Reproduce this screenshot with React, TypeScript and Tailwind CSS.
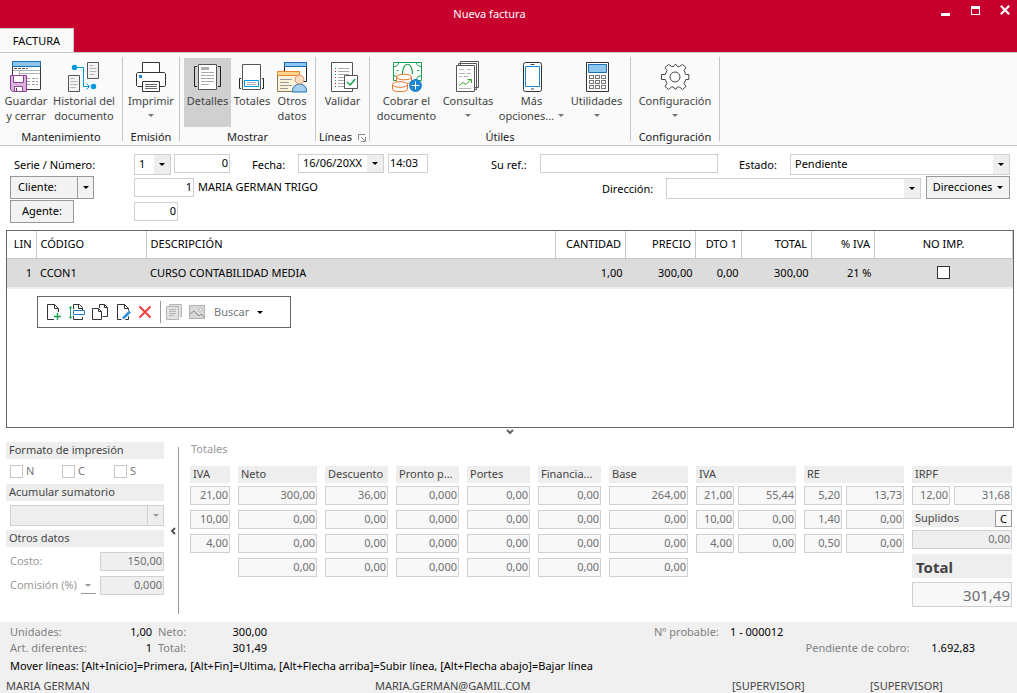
import * as React from "react";
import clsx from "clsx";

interface FieldProps {
  label: string;
  value?: string;
  className?: string;
}

const Caret = ({ className }: { className?: string }) => (
  <svg width="6" height="3" viewBox="0 0 6 3" className={className} fill="currentColor" aria-hidden="true">
    <path d="M0 0h6L3 3z" />
  </svg>
);

function Field({ label, value = "", className }: FieldProps) {
  return (
    <input
      type="text"
      aria-label={label}
      defaultValue={value}
      className={clsx("h-[19px] border border-[#d0d0d0] bg-white px-px pb-[2px] text-right", className)}
    />
  );
}

// read only amount of the totals area
function Amount({ label, value = "", className }: FieldProps) {
  return (
    <input
      type="text"
      readOnly
      aria-label={label}
      defaultValue={value}
      className={clsx("w-full min-w-0 border border-[#d0d0d0] px-px text-right text-[#6e6e6e]", className || "h-[19px] bg-[#f8f8f8] pb-[2px]")}
    />
  );
}

interface DropDownProps {
  id: string;
  label?: string;
  options: string[];
  className?: string;
  disabled?: boolean;
}

function DropDown({ id, label, options, className, disabled }: DropDownProps) {
  return (
    <div className={clsx("relative border border-[#d0d0d0]", className, disabled ? "bg-[#eeeeee] text-[#9a9a9a]" : "bg-white")}>
      <select id={id} aria-label={label} disabled={disabled} className="block h-full w-full appearance-none pl-1 pr-4">
        {options.map((o) => (
          <option key={o}>{o}</option>
        ))}
      </select>
      <span
        className={clsx(
          "pointer-events-none absolute inset-y-0 right-0 flex w-4 items-center justify-center",
          disabled ? "border-l border-[#d0d0d0]" : "bg-[#eeeeee]"
        )}
      >
        <Caret />
      </span>
    </div>
  );
}

/* ---------- ribbon icons, all on a 32px board ---------- */

function Board({ children }: { children: React.ReactNode }) {
  return (
    <svg width="32" height="32" viewBox="0 0 32 32" fill="none" aria-hidden="true">
      {children}
    </svg>
  );
}

const SaveIcon = () => (
  <Board>
    <path d="M2.5.5h28v28h-28z" fill="#fff" stroke="#3b3b3b" />
    <path d="M2.5.5h28v5h-28z" fill="#8fc6ee" stroke="#1a6fb5" />
    <path d="M4 7.5h3m1 0h3m1 0h3m1 0h2" stroke="#555" />
    <path d="M3 9.5h27M9 12.5h21M9.5 10v4" stroke="#b0b0b0" />
    <path d="M17 17.5h3m2 0h3m1 0h2M17 20.5h3m2 0h3m1 0h2M17 23.5h3m2 0h3m1 0h2" stroke="#a0a0a0" />
    <path d="M.5 14.500h16v16h-14l-2-2z" fill="#d9b3dc" stroke="#8e3f98" />
    <path d="M3.500 14.500h10v7h-10z" fill="#fff" stroke="#8e3f98" />
    <path d="M4.500 25.500h8v5h-8z" fill="#fff" stroke="#8e3f98" />
    <path d="M6.500 27v3" stroke="#444" />
  </Board>
);

const HistoryIcon = () => (
  <Board>
    <path d="M19.500 1.500h11v16h-11zM.5 14.500h11v16H.5z" fill="#f4f4f4" stroke="#555" />
    <path d="M21.500 4.500h4m-4 3h7m-7 3h7m-7 3h5M2.500 17.500h4m-4 3h7m-7 3h7m-7 3h5" stroke="#b5b5b5" />
    <path d="M6 6.500h9.500v19H21M18.500 22.500l3 3-3 3" stroke="#0099dd" />
    <circle cx="6.500" cy="6.500" r="2.700" fill="#0099dd" />
    <circle cx="25.500" cy="25.500" r="2.700" fill="#0099dd" />
  </Board>
);

const PrintIcon = () => (
  <Board>
    <path d="M7.500 1.500h17v11h-17z" fill="#fff" stroke="#333" />
    <path d="M7.500 25.500h-5l-1-1v-12l1-1h27l1 1v12l-1 1h-5" fill="#fff" stroke="#333" />
    <path d="M7.500 20.500h17v10h-17z" fill="#fff" stroke="#333" />
    <path d="M10 23.500h12M10 25.500h12M10 27.500h12" stroke="#666" />
    <path d="M4 14h3v3H4z" fill="#1e7fd0" />
  </Board>
);

const DetailsIcon = () => (
  <Board>
    <path d="M6.500 3.500h18v25h-18z" fill="#fff" stroke="#555" />
    <path d="M9 6h8v3H9z" fill="#b0b0b0" />
    <path d="M9 11.500h13M9 14.500h13M9 17.500h13M9 20.500h13M9 23.500h8" stroke="#aaa" />
    <path d="M5 5.500H2.500v20H5M26 5.500h2.500v20H26" stroke="#222" />
  </Board>
);

const TotalsIcon = () => (
  <Board>
    <path d="M6.500 3.500h18v25h-18z" fill="#fff" stroke="#555" />
    <path d="M8.500 19.500h14v6h-14z" fill="#fff" stroke="#0099dd" />
    <path d="M11 21.500h9M11 23.500h9" stroke="#aaa" />
    <path d="M5 17.500H3.500v10H5M26 17.500h1.500v10H26" stroke="#222" />
  </Board>
);

const OtherDataIcon = () => (
  <Board>
    <path d="M8.500 1.500h22v19h-22z" fill="#fff" stroke="#222" />
    <path d="M8.500 1.500h22v4h-22z" fill="#8fc6ee" stroke="#1a6fb5" />
    <path d="M1.500 10.500h22v20h-22z" fill="#fbf3dc" stroke="#8a7b55" />
    <path d="M1.500 10.500h22v4h-22z" fill="#fbd38a" stroke="#e8872e" />
    <path d="M4 18.500h12M4 21.500h9M4 24.500h12M4 27.500h8" stroke="#999" />
    <path d="M16.500 31v-1.500a7 6.500 0 0 1 14 0V31z" fill="#a6cfee" stroke="#1a6fb5" />
    <circle cx="23.500" cy="18.500" r="4.500" fill="#fbdcc0" stroke="#d9905c" />
  </Board>
);

const ValidateIcon = () => (
  <Board>
    <path d="M25.500 14V1.500h-21v29h21V28" fill="#fff" stroke="#555" />
    <path d="M11 7.500h11M11 10.500h11M11 13.500h11M11 16.500h6M11 19.500h6M11 22.500h6M11 25.500h6" stroke="#aaa" />
    <path d="M8 7.500h1M8 13.500h1M8 19.500h1M8 25.500h1" stroke="#12a04a" />
    <path d="M8 10.500h1M8 16.500h1M8 22.500h1" stroke="#d0103a" />
    <path d="M17.500 14.500h13v13h-13z" fill="#fff" stroke="#555" />
    <path d="M20 21l3.200 3 5-6" stroke="#12a04a" strokeWidth="1.500" />
  </Board>
);

const CashIcon = () => (
  <Board>
    <path d="M2.500 1.500h28v18h-28z" fill="#fff" stroke="#12a04a" />
    <path d="M3 5.500c3 0 4-1 4.500-4M25.500 1.500c.5 3 2 4 5 4M3 15c3 0 4 1 4.500 4M30 15c-3 0-4 1-4.500 4M5.500 9.500h2M26 9.500h2" stroke="#12a04a" />
    <path d="M11.500 13c0-13 10-13 10 0" stroke="#12a04a" strokeWidth="1.200" />
    <path d="M5.500 16v4c0 3.500 15 3.500 15 0v-4z" fill="#fff" stroke="#e8762e" />
    <path d="M1.500 24v4c0 3.500 15 3.500 15 0v-4z" fill="#fff" stroke="#e8762e" />
    <ellipse cx="13" cy="16" rx="7.500" ry="2.800" fill="#fff" stroke="#e8762e" />
    <ellipse cx="9" cy="23.500" rx="7.500" ry="2.800" fill="#fff" stroke="#e8762e" />
    <circle cx="24.500" cy="24.500" r="6.500" fill="#1e86d0" />
    <path d="M24.500 20.500v8M20.500 24.500h8" stroke="#fff" />
  </Board>
);

const QueriesIcon = () => (
  <Board>
    <path d="M8.500 .500h18v26h-18zM6.500 2.500h18v26h-18z" fill="#fff" stroke="#555" />
    <path d="M4.500 4.500h18v26h-18z" fill="#fff" stroke="#555" />
    <path d="M7 8.500h5m3 0h4M7 12.500h6m2 0h4M7 15.500h3m2 0h4M7 27.500h12" stroke="#b5b5b5" />
    <path d="M7 24.500l4-3 3 2 5-5M15.500 18.500h4v3.500" stroke="#3fa535" />
  </Board>
);

const PhoneIcon = () => (
  <Board>
    <rect x="7.500" y="1.500" width="18" height="29" rx="2" fill="#fff" stroke="#333" />
    <path d="M9.500 5.500h14v20h-14z" stroke="#1e86d0" />
    <path d="M14.500 3.500h4M15 28h3" stroke="#444" />
  </Board>
);

const CalcIcon = () => (
  <Board>
    <path d="M5.500 1.500h22v29h-22z" fill="#fff" stroke="#333" />
    <path d="M7.500 3.500h18v8h-18z" fill="#8fc6ee" stroke="#1a6fb5" />
    {[14.5, 19.5, 24.5].map((y) => (
      <g key={y} stroke="#777">
        <rect x="8.500" y={y} width="4" height="3" />
        <rect x="14.500" y={y} width="4" height="3" />
        <rect x="20.500" y={y} width="4" height="3" />
      </g>
    ))}
  </Board>
);

const GearIcon = () => (
  <Board>
    <path
      d="M2.500 13.500h3.700l1.800-4-2-3 3.500-3 3 2h2l1.500-2h1l1.500 2h2l3-2 3.500 3-2 3 1.800 4h3v5h-3l-1.800 4 2 3-3.500 3-3-2.500h-2l-1.500 2h-1l-1.500-2h-2l-3 2.500-3.500-3 2-3-1.800-4H2.500z"
      fill="#fff"
      stroke="#444"
      strokeLinejoin="round"
    />
    <circle cx="16" cy="16" r="5" stroke="#444" />
  </Board>
);

interface RibbonButtonProps {
  icon: React.ReactNode;
  lines: string[];
  width: string;
  menu?: boolean;
  active?: boolean;
}

function RibbonButton({ icon, lines, width, menu, active }: RibbonButtonProps) {
  return (
    <button
      type="button"
      className={clsx(
        "flex h-[69px] shrink-0 flex-col items-center whitespace-nowrap pt-[3px] leading-[15px] text-[#444444]",
        width,
        active && "bg-[#d0d0d0]"
      )}
    >
      {icon}
      <span>{lines[0]}</span>
      <span className="flex h-[15px] items-center gap-1">
        {lines[1]}
        {menu && <Caret className="text-[#777777]" />}
      </span>
    </button>
  );
}

interface RibbonGroupProps {
  title: string;
  width: string;
  start?: boolean;
  launcher?: boolean;
  children: React.ReactNode;
}

function RibbonGroup({ title, width, start, launcher, children }: RibbonGroupProps) {
  return (
    <div className={clsx("my-1 flex shrink-0 flex-col border-r border-[#c6c6c6] pt-px", width)}>
      <div className={clsx("flex", start ? "justify-start" : "justify-center")}>{children}</div>
      <div className="flex h-[14px] items-start justify-center gap-[6px] leading-5 text-[#222222]">
        {title}
        {launcher && (
          <svg width="8" height="8" viewBox="0 0 8 8" fill="none" stroke="#888" className="mt-[7px]" aria-hidden="true">
            <path d="M.5 6V.5H7M3 3l3.500 3.500M7.500 3v4.500H3" />
          </svg>
        )}
      </div>
    </div>
  );
}

function TitleBar() {
  return (
    <header className="bg-[#c8002d] text-white">
      <div className="flex h-7 items-center">
        <h1 className="flex-1 pl-[38px] text-center">Nueva factura</h1>
        <div className="flex items-center gap-5 pb-2 pr-[7px]">
          <button type="button" aria-label="Minimizar" className="flex h-3 w-[10px] items-end">
            <span className="h-[3px] w-[9px] bg-white" />
          </button>
          <button type="button" aria-label="Maximizar" className="h-[9px] w-[9px] border border-t-[3px] border-white" />
          <button type="button" aria-label="Cerrar">
            <svg width="10" height="10" viewBox="0 0 10 10" stroke="#fff" strokeWidth="2.200" aria-hidden="true">
              <path d="M.8.8l8.400 8.400M9.200.8L.8 9.200" />
            </svg>
          </button>
        </div>
      </div>
      <nav className="flex h-6">
        <button type="button" className="h-[25px] w-[74px] border-r border-t border-[#c6c6c6] bg-[#fafafa] text-black">
          FACTURA
        </button>
      </nav>
    </header>
  );
}

function Ribbon() {
  return (
    <div className="flex h-[94px] overflow-hidden border-y border-b-[#c6c6c6] border-t-[#c6c6c6] bg-[#fafafa]">
      <RibbonGroup title="Mantenimiento" width="w-[123px]" start>
        <RibbonButton icon={<SaveIcon />} lines={["Guardar", "y cerrar"]} width="w-[52px]" />
        <RibbonButton icon={<HistoryIcon />} lines={["Historial del", "documento"]} width="w-16" />
      </RibbonGroup>
      <RibbonGroup title="Emisión" width="w-[57px]">
        <RibbonButton icon={<PrintIcon />} lines={["Imprimir"]} width="w-[52px]" menu />
      </RibbonGroup>
      <RibbonGroup title="Mostrar" width="w-[136px]">
        <RibbonButton icon={<DetailsIcon />} lines={["Detalles"]} width="w-[47px]" active />
        <RibbonButton icon={<TotalsIcon />} lines={["Totales"]} width="w-[42px]" />
        <RibbonButton icon={<OtherDataIcon />} lines={["Otros", "datos"]} width="w-[38px]" />
      </RibbonGroup>
      <RibbonGroup title="Líneas" width="w-[54px]" launcher>
        <RibbonButton icon={<ValidateIcon />} lines={["Validar"]} width="w-[48px]" />
      </RibbonGroup>
      <RibbonGroup title="Útiles" width="w-[261px]" start>
        <RibbonButton icon={<CashIcon />} lines={["Cobrar el", "documento"]} width="w-[73px]" />
        <RibbonButton icon={<QueriesIcon />} lines={["Consultas"]} width="w-[50px]" menu />
        <RibbonButton icon={<PhoneIcon />} lines={["Más", "opciones..."]} width="w-[77px]" menu />
        <RibbonButton icon={<CalcIcon />} lines={["Utilidades"]} width="w-[53px]" menu />
      </RibbonGroup>
      <RibbonGroup title="Configuración" width="w-[89px]">
        <RibbonButton icon={<GearIcon />} lines={["Configuración"]} width="w-[80px]" menu />
      </RibbonGroup>
    </div>
  );
}

const formButton = "border border-[#999999] bg-[#f3f3f3]";

function InvoiceForm() {
  return (
    <section className="px-[7px] pt-[6px]">
      <div className="flex h-6 items-start pt-[2px]">
        <label htmlFor="serie" className="w-[127px] pl-[7px] leading-[22px]">
          Serie / Número:
        </label>
        <DropDown id="serie" options={["1"]} className="h-[21px] w-[37px]" />
        <Field label="Número" value="0" className="ml-[3px] w-[56px]" />
        <label htmlFor="fecha" className="ml-[22px] w-[46px] leading-[22px]">
          Fecha:
        </label>
        <DropDown id="fecha" options={["16/06/20XX"]} className="h-[19px] w-[86px]" />
        <input aria-label="Hora" defaultValue="14:03" className="ml-1 h-[19px] w-10 border border-[#d0d0d0] px-px pb-[2px]" />
        <label htmlFor="ref" className="ml-auto w-[49px] leading-[22px]">
          Su ref.:
        </label>
        <input id="ref" type="text" className="h-[19px] w-[178px] border border-[#d0d0d0] px-1" />
        <label htmlFor="estado" className="ml-[21px] w-[51px] leading-[22px]">
          Estado:
        </label>
        <DropDown id="estado" options={["Pendiente"]} className="h-[21px] w-[220px]" />
      </div>
      <div className="flex h-6 items-start">
        <div className="ml-[3px] flex w-[124px]">
          <button type="button" className={clsx(formButton, "h-[23px] w-[68px] pl-[7px] text-left")}>
            Cliente:
          </button>
          <button type="button" aria-label="Opciones de cliente" className={clsx(formButton, "-ml-px flex h-[23px] w-[17px] items-center justify-center")}>
            <Caret />
          </button>
        </div>
        <Field label="Cliente" value="1" className="mt-[2px] w-[60px]" />
        <span className="ml-1 flex-1 leading-[22px]">MARIA GERMAN TRIGO</span>
        <label htmlFor="direccion" className="w-16 leading-[25px]">
          Dirección:
        </label>
        <DropDown id="direccion" options={[""]} className="mt-[2px] h-[21px] w-[255px]" />
        <button type="button" className={clsx(formButton, "ml-[5px] flex h-[23px] w-[84px] items-center justify-center gap-[5px]")}>
          Direcciones
          <Caret />
        </button>
      </div>
      <div className="flex h-6 items-start">
        <div className="ml-[3px] w-[124px]">
          <button type="button" className={clsx(formButton, "h-[23px] w-16")}>
            Agente:
          </button>
        </div>
        <Field label="Agente" value="0" className="mt-[2px] w-11" />
      </div>
    </section>
  );
}

const columns = [
  { title: "LIN", width: "w-[29px]", align: "pr-1 text-right", value: "1", pad: "pr-1 text-right" },
  { title: "CÓDIGO", width: "w-[110px]", align: "pl-1 text-left", value: "CCON1", pad: "pl-1" },
  { title: "DESCRIPCIÓN", width: "", align: "pl-1 text-left", value: "CURSO CONTABILIDAD MEDIA", pad: "pl-1" },
  { title: "CANTIDAD", width: "w-[70px]", align: "pr-1 text-right", value: "1,00", pad: "pr-[3px] text-right" },
  { title: "PRECIO", width: "w-[70px]", align: "pr-1 text-right", value: "300,00", pad: "pr-[3px] text-right" },
  { title: "DTO 1", width: "w-[46px]", align: "pr-1 text-right", value: "0,00", pad: "pr-[3px] text-right" },
  { title: "TOTAL", width: "w-[70px]", align: "pr-1 text-right", value: "300,00", pad: "pr-[3px] text-right" },
  { title: "% IVA", width: "w-[63px]", align: "pr-1 text-right", value: "21 %", pad: "pr-[3px] text-right" },
];

function LineToolbar() {
  return (
    <div role="toolbar" className="ml-[30px] mt-[7px] flex h-8 w-[254px] items-center border border-[#666666] px-2">
      <button type="button" aria-label="Nueva línea" className="mr-[7px]">
        <svg width="16" height="17" viewBox="0 0 16 17" fill="none" stroke="#333">
          <path d="M8 15.500H1.500V.5h7l4 4V8M8.500.5v4h4" />
          <path d="M11.500 9v7M8 12.500h7" stroke="#12a04a" strokeWidth="1.400" />
        </svg>
      </button>
      <button type="button" aria-label="Insertar línea" className="mr-[7px]">
        <svg width="16" height="17" viewBox="0 0 16 17" fill="none" stroke="#333">
          <path d="M4.500 5V.5h6l3 3V6M9.500.5v4h4M13.500 13v2.500h-9V12" />
          <path d="M4.500 6.500h11v4h-11z" stroke="#1e7fd0" />
          <path d="M1.500 3v11M0 4.500l1.500-2 1.500 2M0 12.500l1.500 2 1.500-2" stroke="#12a04a" />
        </svg>
      </button>
      <button type="button" aria-label="Duplicar línea" className="mr-[7px]">
        <svg width="17" height="17" viewBox="0 0 17 17" fill="none" stroke="#333">
          <path d="M7.500 4V.5h5l3 3v9h-5M12.500.5v3h3" />
          <path d="M.5 4.500h6l3 3v8h-9zM6.500 4.500v3h3" />
        </svg>
      </button>
      <button type="button" aria-label="Modificar línea" className="mr-[7px]">
        <svg width="15" height="17" viewBox="0 0 15 17" fill="none" stroke="#333">
          <path d="M1.500.5h7l4 4v11h-11zM8.500.5v4h4" />
          <path d="M6 16l8.500-8.500" stroke="#fff" strokeWidth="4" />
          <path d="M7 14.500l7-7" stroke="#2e8fd6" strokeWidth="2.500" />
        </svg>
      </button>
      <button type="button" aria-label="Borrar línea" className="mr-2">
        <svg width="14" height="14" viewBox="0 0 14 14" fill="none" stroke="#ee3e3e" strokeWidth="2">
          <path d="M1.500 1.500l11 11M12.500 1.500l-11 11" />
        </svg>
      </button>
      <div className="mr-[5px] h-[22px] w-px bg-[#999999]" />
      <button type="button" aria-label="Ver detalle" disabled className="mr-[7px]">
        <svg width="16" height="16" viewBox="0 0 16 16" fill="none" stroke="#b5b5b5">
          <path d="M3.500 2V.5h12v12H14" fill="#e4e4e4" />
          <path d="M.5 2.500h12v13H.5z" fill="#e4e4e4" />
          <path d="M3 5.500h7M3 7.500h7M3 9.500h7M3 11.500h5" />
        </svg>
      </button>
      <button type="button" aria-label="Imagen" disabled className="mr-2">
        <svg width="17" height="15" viewBox="0 0 17 15" fill="none" stroke="#b0b0b0">
          <path d="M.5.5h15v13H.5z" fill="#d8d8d8" />
          <path d="M1 9l4-3 5 5 2-2 3.500 3" stroke="#8a8a8a" />
          <circle cx="11.500" cy="4.500" r="1.500" fill="#fff" />
        </svg>
      </button>
      <button type="button" className="flex items-center gap-2 text-[11px] text-[#777777]">
        Buscar
        <Caret className="text-black" />
      </button>
    </div>
  );
}

function LinesGrid() {
  return (
    <section className="ml-[6px] mr-[3px] mt-[6px] h-[198px] border border-[#666666]">
      <table className="w-full table-fixed border-collapse text-[11px]">
        <thead>
          <tr className="h-[27px] border-b border-[#c6c6c6]">
            {columns.map((c) => (
              <th key={c.title} className={clsx("border-r border-[#c6c6c6] p-0 font-normal", c.width, c.align)}>
                {c.title}
              </th>
            ))}
            <th className="w-[138px] border-r border-[#c6c6c6] p-0 text-center font-normal">NO IMP.</th>
          </tr>
        </thead>
        <tbody>
          <tr className="h-[30px] border-b-2 border-[#efefef] bg-[#dcdcdc]">
            {columns.map((c) => (
              <td key={c.title} className={clsx("p-0", c.pad)}>
                {c.value}
              </td>
            ))}
            <td className="p-0">
              <input type="checkbox" aria-label="No imprimir" className="mx-auto block h-[13px] w-[13px] appearance-none border border-[#333333] bg-white" />
            </td>
          </tr>
        </tbody>
      </table>
      <LineToolbar />
    </section>
  );
}

const heading = "h-[17px] overflow-hidden whitespace-nowrap bg-[#eeeeee] px-[3px] leading-[16px] text-[#444444]";
const costField = "h-[19px] w-16 border border-[#d0d0d0] bg-[#efefef] px-px pb-[2px] text-right text-[#6e6e6e]";

function SidePanel() {
  return (
    <aside className="w-[158px] shrink-0 text-[#777777]">
      <h2 className={heading}>Formato de impresión</h2>
      <div className="flex h-[25px] items-center pl-1">
        {["N", "C", "S"].map((f) => (
          <label key={f} className="flex w-[52px] shrink-0 items-center gap-[3px]">
            <input type="checkbox" className="h-[13px] w-[13px] appearance-none border border-[#c6c6c6] bg-white" />
            {f}
          </label>
        ))}
      </div>
      <h2 className={heading}>Acumular sumatorio</h2>
      <DropDown id="acumular" label="Acumular sumatorio" options={[""]} disabled className="my-1 ml-1 h-[21px]" />
      <h2 className={heading}>Otros datos</h2>
      <div className="mt-[5px] flex items-center pl-1 text-[#999999]">
        <label htmlFor="costo" className="flex-1">
          Costo:
        </label>
        <input id="costo" readOnly defaultValue="150,00" className={costField} />
      </div>
      <div className="mt-[5px] flex items-center pl-1 text-[#999999]">
        <label htmlFor="comision">Comisión (%)</label>
        <button type="button" aria-label="Tipo de comisión" className="mx-1 flex h-4 flex-1 items-center justify-center border-b border-[#999999]">
          <Caret />
        </button>
        <input id="comision" readOnly defaultValue="0,000" className={costField} />
      </div>
    </aside>
  );
}

const singleTotals = [
  { title: "IVA", values: ["21,00", "10,00", "4,00"] },
  { title: "Neto", values: ["300,00", "0,00", "0,00", "0,00"] },
  { title: "Descuento", values: ["36,00", "0,00", "0,00", "0,00"] },
  { title: "Pronto p...", values: ["0,000", "0,000", "0,000", "0,000"] },
  { title: "Portes", values: ["0,00", "0,00", "0,00", "0,00"] },
  { title: "Financia...", values: ["0,00", "0,00", "0,00", "0,00"] },
  { title: "Base", values: ["264,00", "0,00", "0,00", "0,00"] },
];

const taxTotals = [
  { title: "IVA", rows: [["21,00", "55,44"], ["10,00", "0,00"], ["4,00", "0,00"]] },
  { title: "RE", rows: [["5,20", "13,73"], ["1,40", "0,00"], ["0,50", "0,00"]] },
];

const pair = "grid grid-cols-[38fr_58fr] gap-1";

function TotalsPanel() {
  return (
    <section className="min-w-0 flex-1 pr-[5px]">
      <h2 className="h-6 pl-px leading-[14px] text-[#999999]">Totales</h2>
      <div className="grid grid-cols-[40fr_79fr_63fr_63fr_63fr_63fr_79fr_100fr_100fr_100fr] items-start gap-2">
        {singleTotals.map((col) => (
          <div key={col.title} className="flex min-w-0 flex-col gap-[5px]">
            <h3 className={clsx(heading, "-mb-[2px]")}>{col.title}</h3>
            {col.values.map((v, i) => (
              <Amount key={i} label={`${col.title} ${i + 1}`} value={v} />
            ))}
          </div>
        ))}
        {taxTotals.map((col) => (
          <div key={col.title} className="flex min-w-0 flex-col gap-[5px]">
            <h3 className={clsx(heading, "-mb-[2px]")}>{col.title}</h3>
            {col.rows.map(([rate, amount], i) => (
              <div key={i} className={pair}>
                <Amount label={`% ${col.title} ${i + 1}`} value={rate} />
                <Amount label={`Cuota ${col.title} ${i + 1}`} value={amount} />
              </div>
            ))}
          </div>
        ))}
        <div className="flex min-w-0 flex-col">
          <h3 className={heading}>IRPF</h3>
          <div className={clsx(pair, "mb-[5px] mt-[3px]")}>
            <Amount label="% IRPF" value="12,00" />
            <Amount label="Cuota IRPF" value="31,68" />
          </div>
          <div className="flex bg-[#eeeeee]">
            <h3 className={clsx(heading, "flex-1")}>Suplidos</h3>
            <button type="button" aria-label="Calcular suplidos" className="h-[17px] w-[17px] border border-[#999999] bg-[#f8f8f8] leading-[14px] text-black">
              C
            </button>
          </div>
          <Amount label="Suplidos" value="0,00" className="mt-[3px] h-[19px] bg-[#efefef] pb-[2px]" />
          <h3 className="mt-[5px] h-6 bg-[#eeeeee] px-1 text-[15px] font-bold leading-[26px] text-[#444444]">Total</h3>
          <Amount label="Total" value="301,49" className="mt-1 h-[25px] bg-[#f8f8f8] text-[15px]" />
        </div>
      </div>
    </section>
  );
}

function Footer() {
  return (
    <footer className="min-h-[71px] bg-[#f0f0f0] pt-[2px] text-black">
      <div className="flex pl-[10px] pr-[42px] leading-4">
        <dl className="grid grid-cols-[92px_50px_67px_48px] text-right">
          <dt className="text-left text-[#808080]">Unidades:</dt>
          <dd>1,00</dd>
          <dt className="pl-[6px] text-left text-[#808080]">Neto:</dt>
          <dd>300,00</dd>
          <dt className="text-left text-[#808080]">Art. diferentes:</dt>
          <dd>1</dd>
          <dt className="pl-[6px] text-left text-[#808080]">Total:</dt>
          <dd>301,49</dd>
        </dl>
        <dl className="ml-auto grid w-[321px] grid-cols-[76px_1fr]">
          <dt className="text-[#808080]">Nº probable:</dt>
          <dd>1 - 000012</dd>
          <div className="col-span-2 flex justify-end gap-[22px]">
            <dt className="text-[#808080]">Pendiente de cobro:</dt>
            <dd>1.692,83</dd>
          </div>
        </dl>
      </div>
      <p className="pl-[10px] pt-px leading-[18px]">
        Mover líneas: [Alt+Inicio]=Primera, [Alt+Fin]=Ultima, [Alt+Flecha arriba]=Subir línea, [Alt+Flecha abajo]=Bajar línea
      </p>
      <div className="grid grid-cols-[369fr_357fr_138fr_147fr] pl-[6px] pt-[3px] leading-4 text-[#444444]">
        <span>MARIA GERMAN</span>
        <span>MARIA.GERMAN@GAMIL.COM</span>
        <span>[SUPERVISOR]</span>
        <span>[SUPERVISOR]</span>
      </div>
    </footer>
  );
}

function App() {
  return (
    <div className="flex min-h-screen flex-col bg-white font-['Noto_Sans',sans-serif] text-[11px] text-black">
      <TitleBar />
      <Ribbon />
      <InvoiceForm />
      <LinesGrid />
      <button type="button" aria-label="Ocultar totales" className="flex h-[14px] items-start justify-center pl-[3px] pt-px">
        <svg width="8" height="6" viewBox="0 0 8 6" fill="none" stroke="#666" strokeWidth="2">
          <path d="M1 1l3 3 3-3" />
        </svg>
      </button>
      <div className="flex min-h-[180px] flex-1 pl-[6px]">
        <SidePanel />
        <button type="button" aria-label="Ocultar panel" className="mb-2 mt-[5px] flex w-[15px] shrink-0 items-center justify-end border-r border-[#999999] pr-[2px]">
          <svg width="6" height="8" viewBox="0 0 6 8" fill="none" stroke="#555" strokeWidth="2">
            <path d="M5 1L2 4l3 3" />
          </svg>
        </button>
        <div className="flex min-w-0 flex-1 pl-[11px]">
          <TotalsPanel />
        </div>
      </div>
      <Footer />
    </div>
  );
}

export default App;
